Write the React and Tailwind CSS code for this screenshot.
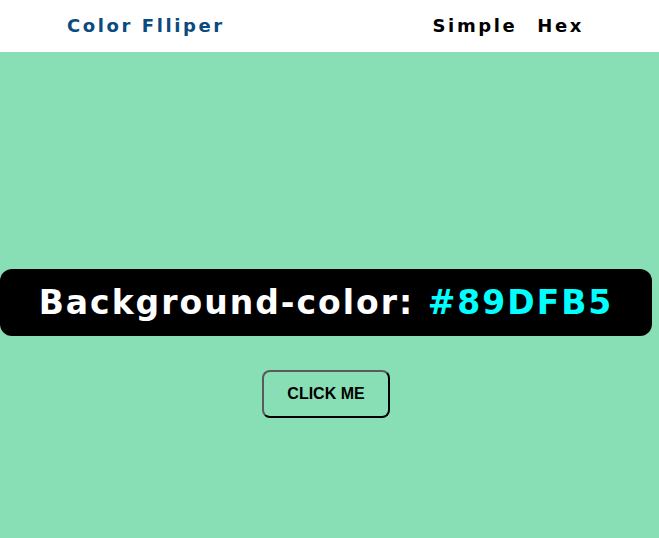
import React, { useState } from "react";

const App = () => {
  const [color] = useState("#89DFB5");

  return (
    <div className="min-h-[538px] bg-[#89DFB5] font-['DejaVu_Sans',sans-serif]">
      {/* Top navigation */}
      <nav className="h-[52px] bg-white flex items-center justify-between pl-[67px] pr-[75px]">
        <h4 className="text-[18px] font-semibold tracking-[2.6px] text-[#0b4a7e] -mt-[2px]">
          Color Flliper
        </h4>
        <ul className="flex gap-[20px] text-[18px] font-semibold tracking-[2.6px] text-black -mt-[2px]">
          <li>Simple</li>
          <li>Hex</li>
        </ul>
      </nav>

      {/* Main content */}
      <main className="w-[652px] flex flex-col items-center pt-[217px]">
        <div className="w-full h-[67px] bg-black rounded-[12px] flex items-center justify-center">
          <h2 className="text-[33px] font-bold tracking-[2px] text-white leading-none">
            Background-color: <span className="text-[#00ffff]">{color}</span>
          </h2>
        </div>
        <button className="mt-[34px] h-[48px] px-[23px] rounded-[8px] border-2 border-t-[#5a5a5a] border-l-[#5a5a5a] border-b-black border-r-black font-['Liberation_Sans',Arial,sans-serif] font-bold text-[16px] text-black">
          CLICK ME
        </button>
      </main>
    </div>
  );
};

export default App;
